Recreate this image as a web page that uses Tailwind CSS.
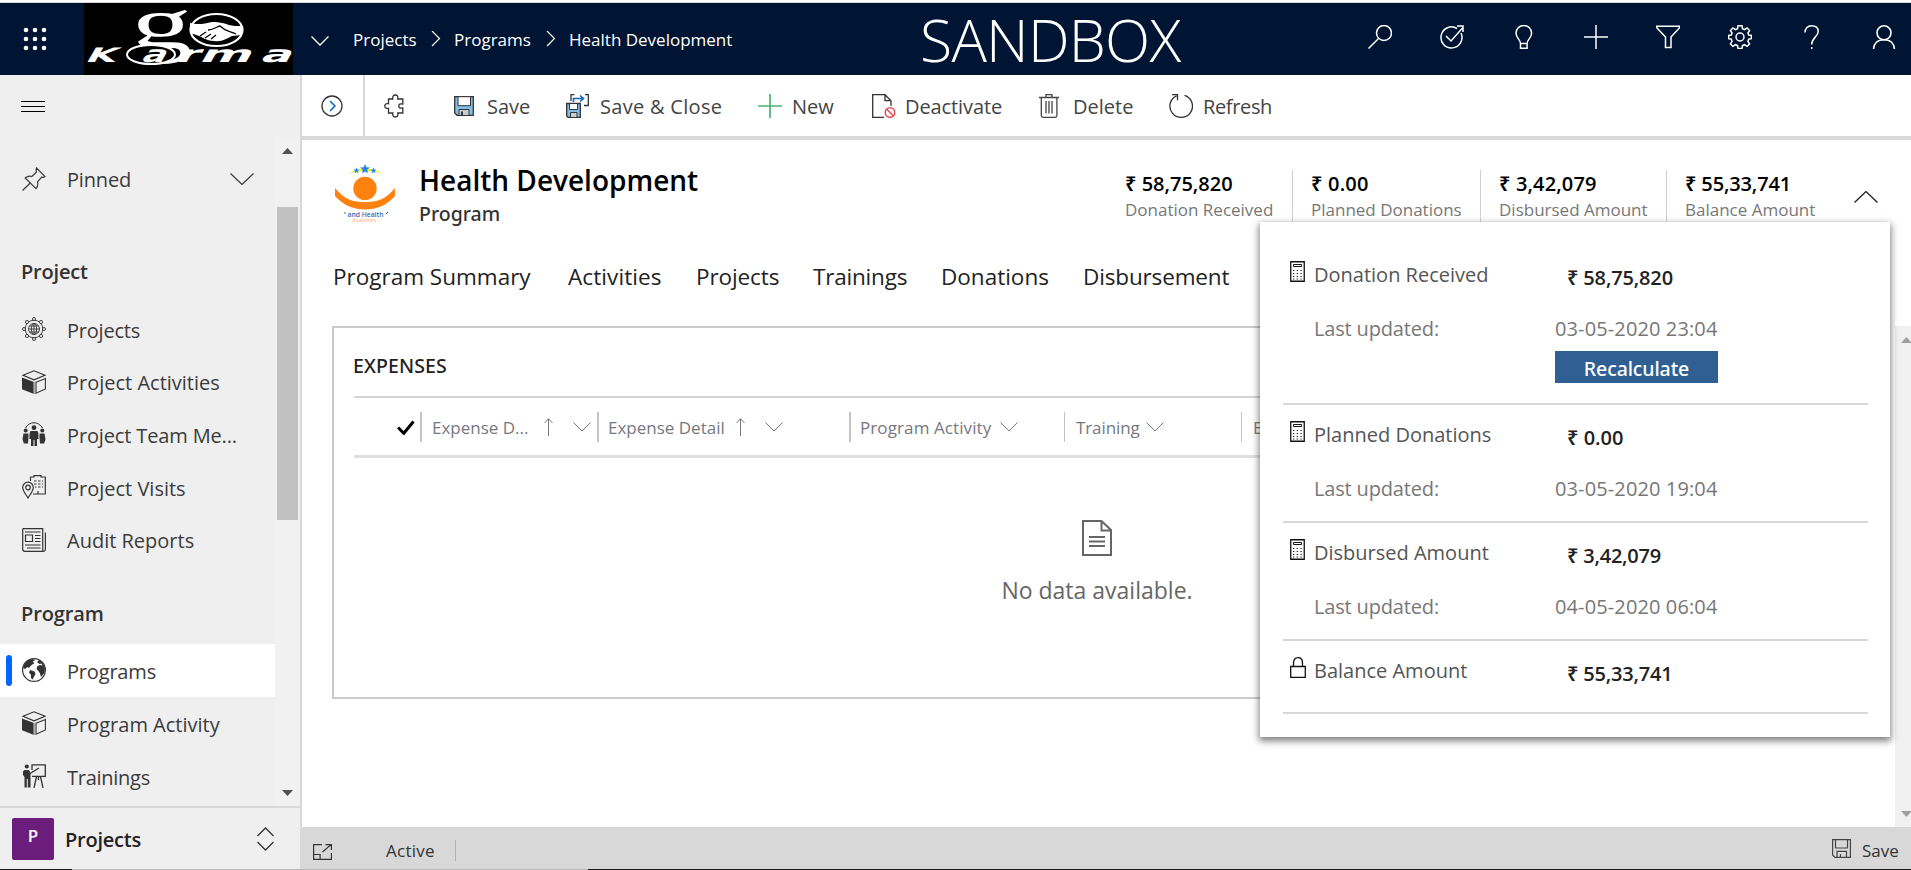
<!DOCTYPE html>
<html lang="en">
<head>
<meta charset="utf-8">
<title>Health Development - Program</title>
<script src="https://cdn.jsdelivr.net/npm/@tailwindcss/browser@4"></script>
</head>
<body class="w-[1911px] h-[870px] overflow-hidden bg-white font-['Open_Sans','Noto_Sans',sans-serif] flex flex-col whitespace-nowrap relative">

<!-- Shared icon shapes -->
<svg class="hidden">
  <symbol id="cube" viewBox="0 0 24 24"><path d="M1 5.2 12 .8l11 4.4-11 4.6z" fill="none" stroke="#333" stroke-width="1.1"/><path d="M0 7.5 12 12v12L0 19.300z" fill="#333"/><path d="M12 12v12" stroke="#999" stroke-width="1.5"/><path d="M14 12.200 23.400 8.500v10.500L14 23.200z" fill="none" stroke="#333" stroke-width="1.100"/></symbol>
  <symbol id="calc" viewBox="0 0 15 21"><path d="M.75.75h13.500v19.500H.75z" fill="#fff" stroke="#111" stroke-width="1.300"/><path d="M3.500 3.500h8v2h-8z" fill="#fff" stroke="#111"/><path d="M3 9.500h9M3 12.500h9M3 15.500h9M3 18h9" stroke="#222" stroke-width="1.200" stroke-dasharray="1.300 2.400"/></symbol>
  <symbol id="chev" viewBox="0 0 18 10"><path d="M.5.5 9 9 17.500.5" fill="none" stroke="currentColor"/></symbol>
  <symbol id="up" viewBox="0 0 9 18"><path d="M4.500 18V.8M.5 5l4-4.200 4 4.200" fill="none" stroke="currentColor"/></symbol>
</svg>

<header class="shrink-0 h-[75px] border-t border-white pt-[1px]">
  <div class="h-[73px] border-t border-[#d8d8d8] bg-[#001433] text-white flex items-center text-[17px]">
    <div class="w-[84px] shrink-0 pl-[23px]">
      <svg class="w-6 h-6" viewBox="0 0 24 24" fill="#fff"><circle cx="3" cy="3" r="2.300"/><circle cx="12" cy="3" r="2.300"/><circle cx="21" cy="3" r="2.300"/><circle cx="3" cy="12" r="2.300"/><circle cx="12" cy="12" r="2.300"/><circle cx="21" cy="12" r="2.300"/><circle cx="3" cy="21" r="2.300"/><circle cx="12" cy="21" r="2.300"/><circle cx="21" cy="21" r="2.300"/></svg>
    </div>
    <svg class="w-[209px] h-[72px] shrink-0 bg-black" viewBox="0 0 209 72">
      <text transform="translate(47 45) scale(1.650 1)" font-family="Liberation Serif" font-size="74" fill="#fff">g</text>
      <ellipse cx="67" cy="51.500" rx="24" ry="9.500" fill="#000" stroke="#fff" stroke-width="2"/>
      <g font-family="DejaVu Sans" font-weight="bold" font-size="23" fill="#fff">
        <text transform="translate(0 58.500) skewX(-30)" textLength="30" lengthAdjust="spacingAndGlyphs" font-size="20">K</text>
        <text transform="translate(56 58.500) skewX(-30)" textLength="24" lengthAdjust="spacingAndGlyphs">a</text>
        <text transform="translate(91 58.500) skewX(-30)" textLength="22" lengthAdjust="spacingAndGlyphs">r</text>
        <text transform="translate(114 58.500) skewX(-30)" textLength="52" lengthAdjust="spacingAndGlyphs">m</text>
        <text transform="translate(175 58.500) skewX(-30)" textLength="31" lengthAdjust="spacingAndGlyphs">a</text>
      </g>
      <ellipse cx="132.500" cy="27" rx="26" ry="16" fill="none" stroke="#fff" stroke-width="2.200"/>
      <path d="M106 20c8 2 14 1 22-1 12-1 16 5 30 4v9l-10 1c-6 3-10 6-18 5-8 0-12-5-24-8z" fill="#fff"/>
      <path d="M124 27c5 0 8-3 12-4 6 6 10 5 16 8M116 33l6-4M121 35l6-4M127 36l5-4" fill="none" stroke="#000" stroke-width="1.300"/>
    </svg>
    <div class="w-[61px] shrink-0 pl-[18px] pt-1"><svg class="w-[18px] h-[10px]" stroke-width="1.300"><use href="#chev"/></svg></div>
    <span class="w-[77px] shrink-0 pt-0.5 -ml-px mr-px">Projects</span>
    <svg class="w-6 h-4 shrink-0" viewBox="0 0 24 16"><path d="M1 0 8.500 7.500 1 15" fill="none" stroke="#fff" stroke-width="1.200"/></svg>
    <span class="w-[91px] shrink-0 pt-0.5 -ml-px mr-px">Programs</span>
    <svg class="w-6 h-4 shrink-0" viewBox="0 0 24 16"><path d="M1 0 8.500 7.500 1 15" fill="none" stroke="#fff" stroke-width="1.200"/></svg>
    <span class="w-[350px] shrink-0 pt-0.5 -ml-px mr-px">Health Development</span>
    <span class="text-[59px] leading-[72px] font-light tracking-[-0.75px]">SANDBOX</span>
    <div class="ml-auto mr-[15px] mb-1 flex gap-12">
      <svg class="w-6 h-6" viewBox="0 0 24 24" fill="none" stroke="#fff" stroke-width="1.500"><circle cx="16" cy="8" r="7.500"/><path d="M10.500 13.500.5 23.500"/></svg>
      <svg class="w-6 h-6" viewBox="0 0 24 24" fill="none" stroke="#fff" stroke-width="1.500"><path d="M17 3.500A10.500 10.500 0 1 0 21 8"/><path d="m6 11 5 5L22.500 3M17 1h6v6"/></svg>
      <svg class="w-6 h-6" viewBox="0 0 24 24" fill="none" stroke="#fff" stroke-width="1.500"><path d="M8.500 18.500c0-4-4.500-5.500-4.500-10.500a7.800 7.500 0 0 1 15.600 0c0 5-4.500 6.500-4.500 10.500zM8.500 18.500v4.700h6.600v-4.700"/></svg>
      <svg class="w-6 h-6" viewBox="0 0 24 24" fill="none" stroke="#fff" stroke-width="1.500"><path d="M12 0v24M0 12h24"/></svg>
      <svg class="w-6 h-6" viewBox="0 0 24 24" fill="none" stroke="#fff" stroke-width="1.500"><path d="M.8 1.200h22.800v1.500L15 12v10.500H9.500V12L.8 2.700z"/></svg>
      <svg class="w-6 h-6" viewBox="0 0 24 24" fill="none" stroke="#fff" stroke-width="1.500"><circle cx="12" cy="12" r="4"/><path d="M10 .8h4l.5 3 2 .9 2.600-1.800 2.500 2.600-1.700 2.500.8 2.100 2.700.4v3.200l-2.700.5-.8 2.100 1.700 2.500-2.500 2.600-2.600-1.700-2 .8-.5 2.900h-4l-.5-2.900-2-.8-2.600 1.700-2.500-2.600 1.700-2.500-.8-2.100-2.700-.5v-3.200l2.700-.4.8-2.100-1.700-2.500 2.500-2.600 2.600 1.800 2-.9z"/></svg>
      <svg class="w-6 h-6" viewBox="0 0 24 24" fill="none" stroke="#fff" stroke-width="1.500"><path d="M5 7.500C5 3.500 7.500.8 11.500.8S18.200 3 18.200 6.500c0 5.500-6.500 6-6.500 13M11.700 22v2"/></svg>
      <svg class="w-6 h-6" viewBox="0 0 24 24" fill="none" stroke="#fff" stroke-width="1.600"><circle cx="12" cy="7.800" r="7"/><path d="M1.500 24c.3-5.500 4-9.300 10.500-9.300S22.200 18.500 22.500 24"/></svg>
    </div>
  </div>
</header>

<div class="flex h-[795px]">
  <!-- Site map -->
  <aside class="w-[302px] shrink-0 border-r-2 border-[#d8d8d8] bg-[#efefef] text-[20px] text-[#3b3b3b] flex flex-col">
    <div class="h-[62px] shrink-0 pl-[21px] pt-[26px]"><svg class="w-6 h-[11px]" viewBox="0 0 24 11"><path d="M0 .5h24M0 5.500h24M0 10.500h24" stroke="#000"/></svg></div>
    <div class="h-[669px] shrink-0 flex">
      <nav class="w-[275px] shrink-0 pt-[15px]">
        <div class="h-[53px] pl-[22px] flex items-center">
          <svg class="w-6 h-6 mr-[21px]" viewBox="0 0 24 24" fill="none" stroke="#3b3b3b" stroke-width="1.200"><path d="M14.500 1 23 9.500l-2 1-1.200-.5-4.300 4.800c.8 2.800.2 5-1.500 6.900L3.200 11c2-1.700 4.300-2.200 6.600-1.500L14.500 5l-.5-1.700zM8 16.300.5 23.500"/></svg>
          <span class="w-[163px] pt-0.5 tracking-[-0.18px]">Pinned</span>
          <svg class="w-6 h-3" viewBox="0 0 24 12"><path d="M.5.5 12 11.500 23.500.5" fill="none" stroke="#3b3b3b" stroke-width="1.200"/></svg>
        </div>
        <div class="mt-[40px] h-[52px] mb-[6px] pl-[21px] pt-0.5 flex items-center font-semibold text-[#333] tracking-[-0.2px]">Project</div>
        <div class="h-[52.6px] pl-[22px] flex items-center gap-[21px]">
          <svg class="w-6 h-6" viewBox="0 0 24 24" fill="none" stroke="#333" stroke-width=".9"><circle cx="12" cy="12" r="8.800"/><circle cx="12" cy="12" r="5.500"/><ellipse cx="12" cy="12" rx="2.600" ry="5.500"/><path d="M6.500 12h11M12 6.500v11M7.300 9h9.400M7.300 15h9.400"/><g fill="#efefef"><circle cx="12" cy="2" r="1.500"/><circle cx="12" cy="22" r="1.500"/><circle cx="2" cy="12" r="1.500"/><circle cx="22" cy="12" r="1.500"/><circle cx="5" cy="5" r="1.600"/><circle cx="19" cy="5" r="1.600"/><circle cx="5" cy="19" r="1.600"/><circle cx="19" cy="19" r="1.600"/></g></svg>
          <span class="pt-1 tracking-[-0.22px]">Projects</span>
        </div>
        <div class="h-[52.6px] pl-[22px] flex items-center gap-[21px]"><svg class="w-6 h-6"><use href="#cube"/></svg><span class="pt-[3px]">Project Activities</span></div>
        <div class="h-[52.6px] pl-[22px] flex items-center gap-[21px]">
          <svg class="w-6 h-6" viewBox="0 0 24 24" fill="#333"><path d="M3.500 6c4-7 13-7 17 0" fill="none" stroke="#333"/><circle cx="12" cy="5.700" r="2.400"/><circle cx="3.700" cy="8.500" r="2"/><circle cx="20.300" cy="8.500" r="2"/><path d="M9 9h6c1.500.5 1.500 2 1.500 8H15v7h-2.500v-6h-1v6H9v-7H7.500C7.500 11 7.500 9.500 9 9zM1.500 11.500h4.800c.5 2 0 6-.3 10H1.800L.5 17zM22.500 11.500h-4.800c-.5 2 0 6 .3 10h4.200l1.300-4.500z"/></svg>
          <span class="pt-1 tracking-[-0.14px]">Project Team Me...</span>
        </div>
        <div class="h-[52.6px] pl-[22px] flex items-center gap-[21px]">
          <svg class="w-6 h-6" viewBox="0 0 24 24" fill="none" stroke="#333" stroke-width="1.200"><path d="M8.500 6V2H12V.7h7V2h4.300v17H11"/><path d="M12 6h2.500M16 6h2.500M20 6h1M12 9h2.500M16 9h2.500M20 9h1M13 12h1.500M16 12h2.500M20 12h1M16 19v-3"/><path d="M6 23c-2-3.500-5.300-7-5.300-10.500a5.300 5.300 0 0 1 10.600 0C11.300 16 8 19.500 6 23z"/><circle cx="6" cy="12.500" r="2.300"/></svg>
          <span class="pt-[3px]">Project Visits</span>
        </div>
        <div class="h-[52.6px] pl-[22px] flex items-center gap-[21px]">
          <svg class="w-6 h-6" viewBox="0 0 24 24" fill="none" stroke="#333" stroke-width="1.200"><path d="M.7.7h20v20.500c0 3 2.700 2.500 2.700-.2V4.500M.7.7V21c0 1.500.8 2.300 2.300 2.300h18.500"/><path d="M3.500 7h7v6.500h-7zM3 4h15.500M13 7.500h5.500M13 10.500h5.500M13 13.500h5.500M3 17h15.500M5 20h13.500"/></svg>
          <span class="pt-[3px]">Audit Reports</span>
        </div>
        <div class="mt-[21px] h-[52px] mb-[5px] pl-[21px] pt-0.5 flex items-center font-semibold text-[#333] tracking-[-0.1px]">Program</div>
        <div class="h-[53px] bg-white pl-[6px] flex items-center">
          <i class="w-[6px] h-[31px] rounded-[3px] bg-[#0066ff] mr-[10px]"></i>
          <svg class="w-6 h-6 mr-[21px]" viewBox="0 0 24 24"><circle cx="12" cy="12" r="11.400" fill="none" stroke="#333" stroke-width="1.200"/><path d="M2 7C4 3 7 1.200 11 1l2 1.500-2.500 1 2 1.500-3.500 2.500-2 2.500-1.500-1L3 11 1 10zM8 12l4.500 1.500 1 2.500-3 5.500-1.500-1.500V17l-2-2.500zM15 4l2-2c3 1.500 5 4.500 6 8l-.5 5-3.500 4-1.200-4-1.800-2.500-1.500-1.500 1-3 2.500-1 2.500.5-1-2-2 .5z" fill="#333"/></svg>
          <span class="pt-1 tracking-[-0.18px]">Programs</span>
        </div>
        <div class="h-[52.6px] pl-[22px] flex items-center gap-[21px]"><svg class="w-6 h-6"><use href="#cube"/></svg><span class="pt-[3px]">Program Activity</span></div>
        <div class="h-[52.6px] pl-[22px] flex items-center gap-[21px]">
          <svg class="w-6 h-6" viewBox="0 0 24 24" fill="none" stroke="#333" stroke-width="1.300"><circle cx="4.800" cy="2.500" r="2.100" fill="#333" stroke="none"/><path d="M2.500 6h4.500l1.500 3v14.500H5.800V15h-1v8.500H2.500V13L1 11V7.500z" fill="#333" stroke="none"/><path d="M8 9.500 17 4M10 6V.8h13.300v11.500H10M14.500 12.500 12 24M18.500 12.500 21 24M16.500 12.500V16"/></svg>
          <span class="pt-1 tracking-[-0.26px]">Trainings</span>
        </div>
      </nav>
      <div class="w-[25px] bg-[#f1f1f1] flex flex-col pl-[2px]">
        <svg class="w-[11px] h-[6px] ml-[5px] mt-[11px]" viewBox="0 0 11 6"><path d="M0 6 5.500 0 11 6z" fill="#505050"/></svg>
        <div class="mt-[53px] w-[21px] h-[313px] bg-[#c1c1c1]"></div>
        <svg class="w-[11px] h-[6px] ml-[5px] mt-auto mb-[10px]" viewBox="0 0 11 6"><path d="M0 0h11L5.500 6z" fill="#505050"/></svg>
      </div>
    </div>
    <div class="h-[63px] shrink-0 border-t-2 border-[#d8d8d8] pl-3 flex items-center font-semibold">
      <div class="w-[42px] h-[42px] rounded-[2px] bg-[#6b1d7b] text-white text-[17px] leading-[36px] text-center mr-[11px]">P</div>
      <span class="w-[192px] pt-[3px] text-[#222] tracking-[-0.23px]">Projects</span>
      <svg class="w-[17px] h-6" viewBox="0 0 17 24"><path d="M.5 9 8.500 1l8 8M.5 15l8 8 8-8" fill="none" stroke="#333" stroke-width="1.300"/></svg>
    </div>
  </aside>

  <main class="w-[1609px] flex flex-col">
    <!-- Command bar -->
    <div class="h-[65px] shrink-0 border-b-4 border-[#d8d8d8] flex items-center text-[20px] text-[#444]">
      <div class="w-[63px] h-full shrink-0 border-r-2 border-[#d8d8d8] flex items-center pl-[19px]">
        <svg class="w-[22px] h-[22px]" viewBox="0 0 22 22" fill="none"><circle cx="11" cy="11" r="10" stroke="#333" stroke-width="1.300"/><path d="m9 6 5 5-5 5" stroke="#0b66c0" stroke-width="1.500"/></svg>
      </div>
      <svg class="w-[70px] h-6 shrink-0 ml-[19px]" viewBox="0 0 70 24" fill="none" stroke="#333" stroke-width="1.300"><path d="M4.500 5h4.300C8.300 2.500 9.300 1 11.300 1s3 1.500 2.500 4h5v5c-3-.7-4 .3-4 2s1 2.700 4 2v5h-5c.5 2.500-.5 4-2.500 4s-3-1.500-2.500-4H4.500v-4.700C2 14.800.8 13.800.8 12S2 9.200 4.500 9.700z"/></svg>
      <svg class="w-5 h-5 shrink-0 mr-[13px]" viewBox="0 0 20 20"><path d="M.7.7h18.600v18.600H3L.7 17z" fill="#83bdea" stroke="#333" stroke-width="1.300"/><path d="M4 .7h12.500v9H4z" fill="#fff" stroke="#333"/><path d="M5 13.500h10v6H5z" fill="#ccc" stroke="#333"/><path d="M8 15.500v4" stroke="#333" stroke-width="2"/></svg>
      <span class="w-[79px] shrink-0 pt-[3px]">Save</span>
      <svg class="w-6 h-6 shrink-0 mr-[10px]" viewBox="0 0 24 24"><path d="M5 7V.7h3.500M19 .7h3.300v10.800H18" fill="none" stroke="#333" stroke-width="1.300"/><path d="M7.500 8V4.500h9M14 1.500l3.500 3-3.500 3" fill="none" stroke="#0b66c0" stroke-width="1.600"/><path d="M.7 9.500h13.600v13.800H2L.7 22z" fill="#83bdea" stroke="#333" stroke-width="1.300"/><path d="M3.500 9.500h8v6h-8z" fill="#fff" stroke="#333"/><path d="M4.500 18.500h6.500v5H4.500z" fill="#ccc" stroke="#333"/></svg>
      <span class="w-[158px] shrink-0 pt-[3px] tracking-[0.3px]">Save &amp; Close</span>
      <svg class="w-6 h-6 shrink-0 mr-[10px]" viewBox="0 0 24 24"><path d="M12 0v24M0 12h24" stroke="#48b474" stroke-width="1.700"/></svg>
      <span class="w-[80px] shrink-0 pt-[3px]">New</span>
      <svg class="w-6 h-6 shrink-0 mr-[9px]" viewBox="0 0 24 24" fill="none"><path d="M12 23.300H.7V.7H13l6 6V12M13 .7v6h6" stroke="#333" stroke-width="1.300"/><circle cx="18" cy="18.500" r="4.800" stroke="#e84c50" stroke-width="1.500"/><path d="m14.500 15 7 7" stroke="#e84c50" stroke-width="1.500"/></svg>
      <span class="w-[134px] shrink-0 pt-[3px] tracking-[-0.1px]">Deactivate</span>
      <svg class="w-5 h-6 shrink-0 mr-[14px]" viewBox="0 0 20 24" fill="none" stroke="#444" stroke-width="1.300"><path d="M0 3.500h20M7 3.500V.7h6v2.800M2.300 3.500v18c0 1.200.6 1.800 1.800 1.800h12c1.200 0 1.800-.6 1.800-1.800v-18M7 7v12.500M10 7v12.500M13 7v12.500"/></svg>
      <span class="w-[96px] shrink-0 pt-[3px]">Delete</span>
      <svg class="w-6 h-6 shrink-0 mr-[10px]" viewBox="0 0 24 24" fill="none" stroke="#333" stroke-width="1.300"><path d="M15.500 1.300A11.300 11.300 0 1 1 7.500 1.800M3 .7h5.500v5.500"/></svg>
      <span class="pt-[3px] tracking-[-0.36px]">Refresh</span>
    </div>

    <!-- Record header -->
    <div class="h-[101px] shrink-0 pl-[33px] pt-[22px] flex items-start">
      <svg class="w-[60px] h-[62px] shrink-0 mr-[24px]" viewBox="0 0 60 62">
        <path d="M13 12c10-7 25-7 35 0-10-4-25-4-35 0z" fill="#f3ef2a"/>
        <path d="m30 2 1.400 3.200 3.500.3-2.700 2.300.8 3.400-3-1.800-3 1.800.8-3.400-2.700-2.300 3.500-.3zM21.500 5.500l.8 2 2.200.2-1.700 1.400.5 2.100-1.800-1.100-1.900 1.100.5-2.100-1.700-1.400 2.200-.2zM38.500 5.500l.8 2 2.200.2-1.700 1.400.5 2.100-1.800-1.100-1.900 1.100.5-2.100-1.700-1.400 2.200-.2z" fill="#2387e8"/>
        <circle cx="30" cy="26.500" r="11.700" fill="#ff820e"/>
        <path d="M0 26c10 12 18 14 30 14s20-2 30-14v8C51 44 41 47.500 30 47.500S9 44 0 34z" fill="#ff820e"/>
        <text x="12.500" y="54.500" font-family="Open Sans" font-weight="600" font-size="6.500" fill="#3a6ab0" textLength="36" lengthAdjust="spacingAndGlyphs">and Health</text>
        <text x="17" y="60" font-family="Open Sans" font-size="4.500" fill="#f5b070" textLength="24" lengthAdjust="spacingAndGlyphs">disabilities</text>
        <path d="M9 51h2M51 52l2-2" stroke="#3a6ab0"/>
      </svg>
      <div class="w-[706px] shrink-0 flex flex-col">
        <span class="text-[28px] leading-9 font-semibold text-black">Health Development</span>
        <span class="text-[19.5px] leading-[31px] font-medium text-[#333] font-['Noto_Sans']">Program</span>
      </div>
      <div class="flex pt-[8px]">
        <div class="w-[168px] h-[71px] border-r border-[#d0d0d0] flex flex-col"><span class="text-[20px] leading-[28px] font-semibold text-black">₹ 58,75,820</span><span class="text-[17px] leading-[24px] text-[#777]">Donation Received</span></div>
        <div class="w-[188px] h-[71px] pl-[18px] border-r border-[#d0d0d0] flex flex-col"><span class="text-[20px] leading-[28px] font-semibold text-black tracking-[0.2px]">₹ 0.00</span><span class="text-[17px] leading-[24px] text-[#777]">Planned Donations</span></div>
        <div class="w-[186px] h-[71px] pl-[18px] border-r border-[#d0d0d0] flex flex-col"><span class="text-[20px] leading-[28px] font-semibold text-black tracking-[0.15px]">₹ 3,42,079</span><span class="text-[17px] leading-[24px] text-[#777]">Disbursed Amount</span></div>
        <div class="w-[187px] h-[71px] pl-[18px] flex flex-col"><span class="text-[20px] leading-[28px] font-semibold text-black tracking-[-0.14px]">₹ 55,33,741</span><span class="text-[17px] leading-[24px] text-[#777]">Balance Amount</span></div>
        <svg class="w-6 h-3 mt-[21px]" viewBox="0 0 24 12"><path d="M.5 11.500 12 .5l11.500 11" fill="none" stroke="#222" stroke-width="1.300"/></svg>
      </div>
    </div>

    <div class="h-[85px] shrink-0 pl-[31px] pt-[18px] flex text-[22.5px] leading-[36px] text-[#222]">
      <span class="w-[235px]">Program Summary</span>
      <span class="w-[128px] tracking-[0.1px]">Activities</span>
      <span class="w-[117px] tracking-[-0.1px]">Projects</span>
      <span class="w-[128px] tracking-[-0.2px]">Trainings</span>
      <span class="w-[142px]">Donations</span>
      <span class="tracking-[-0.15px]">Disbursement</span>
    </div>

    <div class="h-[501px] shrink-0 flex justify-between">
      <section class="ml-[30px] w-[1540px] h-[373px] border-2 border-[#cacaca] pl-[20px] pr-[20px]">
        <h2 class="h-[70px] border-b-2 border-[#d4d4d4] text-[19.5px] leading-[79px] font-medium text-[#222] box-content -mt-[2px] font-['Noto_Sans'] tracking-[0.1px]"><span class="-ml-px">EXPENSES</span></h2>
        <div class="h-[60px] border-b-3 border-[#e0e0e0] flex items-center text-[17px] text-[#77777f]">
          <svg class="w-[18px] h-[15px] ml-[43px] mr-[5px] mt-px shrink-0" viewBox="0 0 18 15"><path d="m1 7.500 5.800 5.800L16.500 1.500" fill="none" stroke="#000" stroke-width="3"/></svg>
          <i class="w-[2px] h-[30px] bg-[#c4c4c4] mr-[10px] shrink-0"></i>
          <span class="w-[112px] shrink-0 pt-0.5">Expense D...</span>
          <svg class="w-[9px] h-[18px] mr-5 shrink-0"><use href="#up"/></svg>
          <svg class="w-[18px] h-[10px] mr-[6px] shrink-0"><use href="#chev"/></svg>
          <i class="w-[2px] h-[30px] bg-[#c4c4c4] mr-[9px] shrink-0"></i>
          <span class="w-[128px] shrink-0 pt-0.5">Expense Detail</span>
          <svg class="w-[9px] h-[18px] mr-5 shrink-0"><use href="#up"/></svg>
          <svg class="w-[18px] h-[10px] mr-[66px] shrink-0"><use href="#chev"/></svg>
          <i class="w-[2px] h-[30px] bg-[#c4c4c4] mr-[9px] shrink-0"></i>
          <span class="w-[140px] shrink-0 pt-0.5 tracking-[0.1px]">Program Activity</span>
          <svg class="w-[18px] h-[10px] mr-[46px] shrink-0"><use href="#chev"/></svg>
          <i class="w-px h-[30px] bg-[#c4c4c4] mr-[11px] shrink-0"></i>
          <span class="w-[70px] shrink-0 pt-0.5 tracking-[-0.1px]">Training</span>
          <svg class="w-[18px] h-[10px] mr-[77px] shrink-0"><use href="#chev"/></svg>
          <i class="w-px h-[30px] bg-[#c4c4c4] mr-[11px] shrink-0"></i>
          <span class="pt-0.5">E</span>
        </div>
        <div class="w-[1486px] pt-[62px] flex flex-col items-center text-[23px] text-[#666]">
          <svg class="w-[30px] h-9" viewBox="0 0 30 36" fill="none" stroke="#666" stroke-width="2"><path d="M1 1h18.500L29 10v25H1zM19.500 1v9.500H29M7 17h16M7 21.500h16M7 26h16"/></svg>
          <span class="mt-4 leading-9">No data available.</span>
        </div>
      </section>
      <div class="w-4 bg-[#f0f0f0] flex flex-col justify-between items-end pt-[11px] pb-[10px]">
        <svg class="w-[10px] h-[6px]" viewBox="0 0 10 6"><path d="M0 6 5.500 0 11 6z" fill="#a0a0a0"/></svg>
        <svg class="w-[10px] h-[6px]" viewBox="0 0 10 6"><path d="M0 0h11L5.500 6z" fill="#a0a0a0"/></svg>
      </div>
    </div>

    <footer class="h-[43px] shrink-0 bg-[#d8d8d8] flex items-center text-[17px] text-[#333] pl-[11px] pr-[12px]">
      <svg class="w-[19px] h-4 shrink-0 mr-[54px] mt-[6px]" viewBox="0 0 19 16" fill="none" stroke="#333" stroke-width="1.200"><path d="M9 .6H.6v14.800h17.800V9M.6 10.500h6.500v5M9.500 8 18 .6M12.500.6h5.900v5.500"/></svg>
      <span class="w-[69px] pt-1 tracking-[0.25px]">Active</span>
      <i class="w-px h-[21px] bg-[#b0b0b0] mt-1"></i>
      <svg class="w-[19px] h-[19px] ml-auto mr-[11px]" viewBox="0 0 19 19" fill="none" stroke="#444" stroke-width="1.200"><path d="M.6.6h17.800v17.800H3L.6 16zM3.500.6v8.400h12V.6M5 18.400v-6h9.500v6M8.500 15v3.400"/></svg>
      <span class="w-[37px] pt-1">Save</span>
    </footer>
  </main>
</div>
<!-- Window edge along the bottom -->
<div class="absolute left-0 bottom-0 w-full h-px flex"><i class="w-[72px] bg-[#1a1a1a]"></i><i class="w-[516px] bg-[#b8b8b8]"></i><i class="flex-1 bg-[#1a1a1a]"></i></div>

<!-- Rollup flyout -->
<div class="absolute left-[1260px] top-[222px] w-[630px] h-[515px] bg-white shadow-[0_3px_7px_1px_rgba(0,0,0,0.5)] pl-[23px] pr-[22px] pt-[26px] text-[20px] text-[#555]">
  <div class="h-[157px] border-b-2 border-[#d8d8d8] pl-[7px] flex">
    <svg class="w-[15px] h-[21px] mt-[13px] mr-[9px] shrink-0"><use href="#calc"/></svg>
    <div class="w-[241px] flex flex-col pt-0.5"><span class="leading-[50px]">Donation Received</span><span class="leading-[58px] text-[#777] tracking-[-0.16px]">Last updated:</span></div>
    <div class="flex flex-col pt-px"><span class="pl-[12px] leading-[58px] text-[#222] font-semibold tracking-[-0.15px]">₹ 58,75,820</span><span class="leading-[44px] text-[#777] tracking-[0.12px]">03-05-2020 23:04</span><span class="w-[163px] h-8 bg-[#2f5f93] text-white text-center leading-[35px] font-medium text-[19.5px] font-['Noto_Sans'] tracking-[-0.1px]">Recalculate</span></div>
  </div>
  <div class="h-[118px] border-b-2 border-[#d8d8d8] pl-[7px] flex">
    <svg class="w-[15px] h-[21px] mt-4 mr-[9px] shrink-0"><use href="#calc"/></svg>
    <div class="w-[241px] flex flex-col pt-[5px]"><span class="leading-[50px]">Planned Donations</span><span class="leading-[58px] text-[#777] tracking-[-0.16px]">Last updated:</span></div>
    <div class="flex flex-col pt-1"><span class="pl-[12px] leading-[58px] text-[#222] font-semibold">₹ 0.00</span><span class="leading-[44px] text-[#777] tracking-[0.12px]">03-05-2020 19:04</span></div>
  </div>
  <div class="h-[118px] border-b-2 border-[#d8d8d8] pl-[7px] flex">
    <svg class="w-[15px] h-[21px] mt-4 mr-[9px] shrink-0"><use href="#calc"/></svg>
    <div class="w-[241px] flex flex-col pt-[5px]"><span class="leading-[50px]">Disbursed Amount</span><span class="leading-[58px] text-[#777] tracking-[-0.16px]">Last updated:</span></div>
    <div class="flex flex-col pt-1"><span class="pl-[12px] leading-[58px] text-[#222] font-semibold tracking-[-0.21px]">₹ 3,42,079</span><span class="leading-[44px] text-[#777] tracking-[0.12px]">04-05-2020 06:04</span></div>
  </div>
  <div class="h-[73px] border-b-2 border-[#d8d8d8] pl-[7px] flex">
    <svg class="w-4 h-[21px] mt-4 mr-[8px] shrink-0" viewBox="0 0 16 21" fill="none" stroke="#111" stroke-width="1.300"><path d="M.7 9.500h14.600v10.800H.7zM3.500 9.500V6c0-3.500 1.800-5.300 4.500-5.300S12.500 2.500 12.500 6v3.500"/></svg>
    <div class="w-[253px] pt-[5px] leading-[50px]">Balance Amount</div>
    <div class="pt-1 leading-[58px] text-[#222] font-semibold tracking-[-0.2px]">₹ 55,33,741</div>
  </div>
</div>
</body>
</html>
